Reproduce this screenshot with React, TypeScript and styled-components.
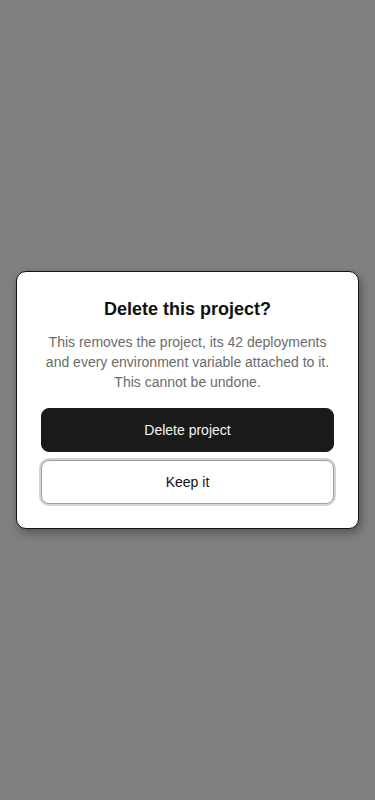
import React from "react";
import styled, { createGlobalStyle } from "styled-components";

const Global = createGlobalStyle`
  html, body { margin: 0; padding: 0; }
  body { font-family: "Liberation Sans", Arial, sans-serif; background: #808080; }
  * { box-sizing: border-box; }
`;

const Overlay = styled.div`
  width: 375px;
  height: 800px;
  background: #808080;
  display: flex;
  align-items: center;
  justify-content: center;
  padding: 0 16px;
`;

const Dialog = styled.div`
  width: 100%;
  background: #ffffff;
  border: 1px solid #141414;
  border-radius: 10px;
  box-shadow: 2px 4px 10px rgba(0, 0, 0, 0.35);
  padding: 25px 24px 24px;
  display: flex;
  flex-direction: column;
  text-align: center;
`;

const Title = styled.h2`
  margin: 0;
  font-size: 18px;
  line-height: 24px;
  font-weight: 700;
  color: #111111;
`;

const Body = styled.p`
  margin: 11px 0 0;
  font-size: 14px;
  line-height: 20px;
  color: #6b6b6b;
`;

const Actions = styled.div`
  margin-top: 16px;
  display: flex;
  flex-direction: column;
  gap: 8px;
`;

const Button = styled.button<{ $variant: "primary" | "secondary" }>`
  height: 44px;
  width: 100%;
  border-radius: 8px;
  font-family: "Liberation Sans", Arial, sans-serif;
  font-size: 14px;
  cursor: pointer;
  background: ${(p) => (p.$variant === "primary" ? "#1a1a1a" : "#ffffff")};
  color: ${(p) => (p.$variant === "primary" ? "#f5f5f5" : "#111111")};
  border: ${(p) => (p.$variant === "primary" ? "1px solid #1a1a1a" : "1px solid #a0a0a0")};
  box-shadow: ${(p) => (p.$variant === "primary" ? "none" : "0 0 0 2px #d4d4d4")};
`;

export default function App() {
  return (
    <>
      <Global />
      <Overlay>
        <Dialog role="dialog" aria-modal="true">
          <Title>Delete this project?</Title>
          <Body>
            This removes the project, its 42 deployments and every environment variable attached to it. This cannot be undone.
          </Body>
          <Actions>
            <Button $variant="primary">Delete project</Button>
            <Button $variant="secondary">Keep it</Button>
          </Actions>
        </Dialog>
      </Overlay>
    </>
  );
}
